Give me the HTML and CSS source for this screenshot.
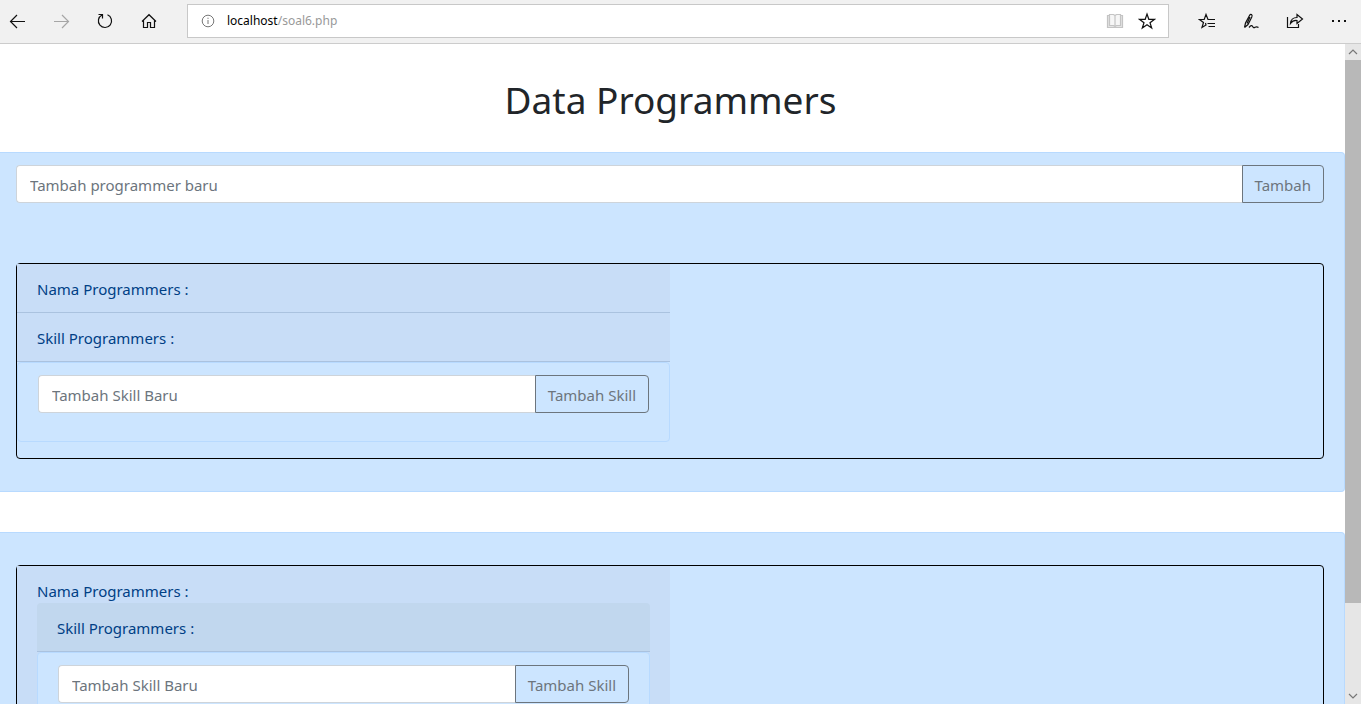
FILE: index.html
```html
<!DOCTYPE html>
<html lang="id">
<head>
<meta charset="utf-8">
<title>Data Programmers</title>
<link rel="stylesheet" href="styles.css">
</head>
<body>
<header class="toolbar">
  <nav class="nav-buttons" aria-label="Navigation">
    <button class="tool" aria-label="Back"><svg width="18" height="18" viewBox="0 0 18 18"><path d="M2 9.500h15M9 3L2.500 9.500L9 16"/></svg></button>
    <button class="tool tool-off" aria-label="Forward"><svg width="18" height="18" viewBox="0 0 18 18"><path d="M2 9.500h15M10 3l6.500 6.500L10 16"/></svg></button>
    <button class="tool" aria-label="Refresh"><svg width="18" height="18" viewBox="0 0 18 18"><path d="M11.500 2.800A6.600 6.600 0 1 1 6 3M2.500 2.500h4v4"/></svg></button>
    <button class="tool" aria-label="Home"><svg width="18" height="18" viewBox="0 0 18 18"><path d="M2 9.500L9 2.700L16 9.500M3.500 8.500v7h4v-5h3v5h4v-7"/></svg></button>
  </nav>
  <div class="address">
    <svg class="info" width="14" height="14" viewBox="0 0 14 14"><circle cx="7" cy="7" r="5.800"/><path d="M7 6v4M7 3.700v1.200"/></svg>
    <span class="url"><span class="host">localhost</span>/soal6.php</span>
    <button class="tool book" aria-label="Reading view"><svg width="18" height="18" viewBox="0 0 18 18"><path class="cover" d="M1.500 3.500H16.500V15.500H1.500Z"/><path class="leaf" d="M3.500 2.500H7.500L9 3.500L10.500 2.500H14.500V13.500H10.500L9 14.500L7.500 13.500H3.500ZM9 3.500V15"/></svg></button>
    <button class="tool" aria-label="Add to favorites"><svg width="18" height="18" viewBox="0 0 18 18"><path d="M9 2L10.800 7.300H16.500L12 10.700L13.700 16L9 12.800L4.300 16L6 10.700L1.500 7.300H7.200Z"/></svg></button>
  </div>
  <div class="hub-buttons">
    <button class="tool" aria-label="Favorites"><svg width="18" height="18" viewBox="0 0 18 18"><path d="M10.500 7.500H10L8 2.500L6.200 7.500H1.500L5.500 10.500L4 15.500L8 13L7.500 11M10 7.500h7M9.500 11.500H17M10.500 14.500H17"/></svg></button>
    <button class="tool" aria-label="Add notes"><svg width="18" height="18" viewBox="0 0 18 18"><path d="M2.500 15.500L3.500 11L7.500 3.500Q8.300 2 9.500 2.500Q10.500 3.200 9.800 5L6 12.500L2.500 15.500M8 5L5 11.500M7 15.500Q9.500 12.500 10.500 14.200Q11.500 16.500 13 15.200Q15 14.500 16.500 15.500"/></svg></button>
    <button class="tool" aria-label="Share"><svg width="18" height="18" viewBox="0 0 18 18"><path d="M1.500 5v10.500h11V12M4.500 11.500Q5 5.500 11 5.500V2.500L16.500 7L11 11.500V8.500Q7 8 4.500 11.500Z"/></svg></button>
    <button class="tool" aria-label="More"><svg width="18" height="18" viewBox="0 0 18 18"><path class="dots" d="M2 8h2v2H2zM8 8h2v2H8zM14 8h2v2h-2z"/></svg></button>
  </div>
</header>
<div class="viewport">
  <main class="page">
    <h1>Data Programmers</h1>
    <section class="panel panel-new">
      <form class="group">
        <input type="text" placeholder="Tambah programmer baru" aria-label="Tambah programmer baru">
        <button type="button">Tambah</button>
      </form>
      <div class="box box-first">
        <div class="card">
          <div class="card-header">Nama Programmers :</div>
          <div class="card-header">Skill Programmers :</div>
          <form class="card-body">
            <div class="group">
              <input type="text" placeholder="Tambah Skill Baru" aria-label="Tambah Skill Baru">
              <button type="button">Tambah Skill</button>
            </div>
          </form>
        </div>
      </div>
    </section>
    <section class="panel panel-list">
      <div class="box">
        <div class="card card-header">
          Nama Programmers :
          <div class="card-inner">
            <div class="card-header">Skill Programmers :</div>
            <form class="card-body">
              <div class="group">
                <input type="text" placeholder="Tambah Skill Baru" aria-label="Tambah Skill Baru">
                <button type="button">Tambah Skill</button>
              </div>
            </form>
          </div>
        </div>
      </div>
    </section>
  </main>
  <div class="scrollbar" aria-hidden="true">
    <svg width="16" height="16" viewBox="0 0 16 16"><path d="M4 10l4-4l4 4"/></svg>
    <div class="track"><div class="thumb"></div></div>
    <svg width="16" height="16" viewBox="0 0 16 16"><path d="M4 6l4 4l4-4"/></svg>
  </div>
</div>
</body>
</html>
```
FILE: styles.css
```css
* { box-sizing: border-box; }

body {
  margin: 0;
  height: 100vh;
  display: flex;
  flex-direction: column;
  overflow: hidden;
  background: #fff;
  color: #212529;
  font: 15px/24px "Noto Sans", "Open Sans", sans-serif;
}

button, input { font: inherit; margin: 0; }

/* Browser toolbar */
.toolbar {
  flex: none;
  display: flex;
  align-items: center;
  height: 44px;
  padding: 0 13px 1px 8px;
  background: #f1f1f1;
  border-bottom: 1px solid #ccc;
}
.nav-buttons, .hub-buttons { display: flex; gap: 26px; }
.nav-buttons { margin-right: 29px; }
.hub-buttons { margin-left: 29px; }
.tool {
  display: block;
  width: 18px;
  height: 18px;
  padding: 0;
  border: 0;
  background: none;
  color: #111;
}
.tool svg, .info, .scrollbar svg {
  display: block;
  fill: none;
  stroke: currentColor;
  stroke-width: 1.2;
}
.tool .dots { fill: currentColor; stroke: none; }
.tool-off { color: #a6a6a6; }
.address {
  flex: 1;
  display: flex;
  align-items: center;
  height: 34px;
  padding: 0 12px 0 13px;
  border: 1px solid #c8c8c8;
  background: #fff;
}
.info { color: #777; stroke-width: 1; }
.url {
  flex: 1;
  margin-left: 12px;
  font-size: 12px;
  color: #999;
}
.host { color: #000; }
.book { margin-right: 14px; color: #c4c4c4; }
.book .cover { fill: #e4e4e4; }
.book .leaf { fill: #f6f6f6; }

/* Page area */
.viewport { flex: 1; display: flex; min-height: 0; }
.page { flex: 1; overflow: hidden; }
h1 {
  margin: 32px 0 28px;
  padding-right: 4px;
  font-size: 37px;
  font-weight: 400;
  line-height: 48px;
  text-align: center;
}
.panel {
  margin-bottom: 40px;
  padding: 12px 20px 32px 16px;
  border: 1px solid #b8daff;
  border-left: 0;
  border-radius: 0 4px 4px 0;
  background: #cce5ff;
  color: #004085;
}
.panel-list { padding-top: 32px; }

.group { display: flex; }
.group input {
  flex: 1;
  min-width: 0;
  height: 38px;
  padding: 7px 13px 5px;
  border: 1px solid #ced4da;
  border-right: 0;
  border-radius: 4px 0 0 4px;
  background: #fff;
  color: #495057;
}
.group input::placeholder { color: #6c757d; opacity: 1; }
.group button {
  height: 38px;
  padding: 7px 12px 5px;
  border: 1px solid #6c757d;
  border-radius: 0 4px 4px 0;
  background: transparent;
  color: #6c757d;
}

.box {
  padding-bottom: 16px;
  border: 1px solid #000;
  border-radius: 4px;
}
.box-first { margin-top: 60px; }
.card { width: 50%; }
.card-header {
  padding: 13px 20px 11px;
  border-bottom: 1px solid #aac2df;
  background: #c8ddf7;
}
.card-inner .card-header {
  border-radius: 4px 4px 0 0;
  background: #c1d7ee;
}
.card-body {
  padding: 12px 20px 28px;
  border: 1px solid #b8daff;
  border-radius: 4px;
  background: #cce5ff;
}

/* Scrollbar */
.scrollbar {
  width: 16px;
  display: flex;
  flex-direction: column;
  background: #e6e6e6;
  color: #777;
}
.track { flex: 1; }
.thumb { height: 86.5%; background: #b8b8b8; }
```
